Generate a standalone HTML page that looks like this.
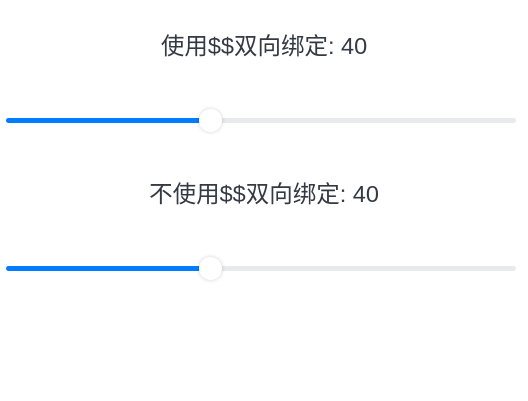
<!DOCTYPE html>
<html><head><meta charset="utf-8"><style>
body{margin:0;width:528px;height:401px;background:#fff;position:relative;font-family:"Liberation Sans","Noto Sans CJK SC",sans-serif;overflow:hidden}
.t{position:absolute;left:0;width:528px;text-align:center;font-size:23.5px;color:#333a44;line-height:26px}
.track{position:absolute;left:6px;width:510px;height:5px;border-radius:3px;background:#e9eaeb}
.fill{position:absolute;left:0;top:0;height:5px;width:200px;border-radius:3px;background:#007dff}
.th{position:absolute;left:193px;top:-9px;width:23px;height:23px;border-radius:50%;background:#fff;box-shadow:0 0 4px rgba(0,0,0,.18)}
</style></head><body>
<div class="t" style="top:33px">使用$$双向绑定: 40</div>
<div class="track" style="top:118px"><div class="fill"></div><div class="th"></div></div>
<div class="t" style="top:181px">不使用$$双向绑定: 40</div>
<div class="track" style="top:266px"><div class="fill"></div><div class="th"></div></div>
</body></html>
